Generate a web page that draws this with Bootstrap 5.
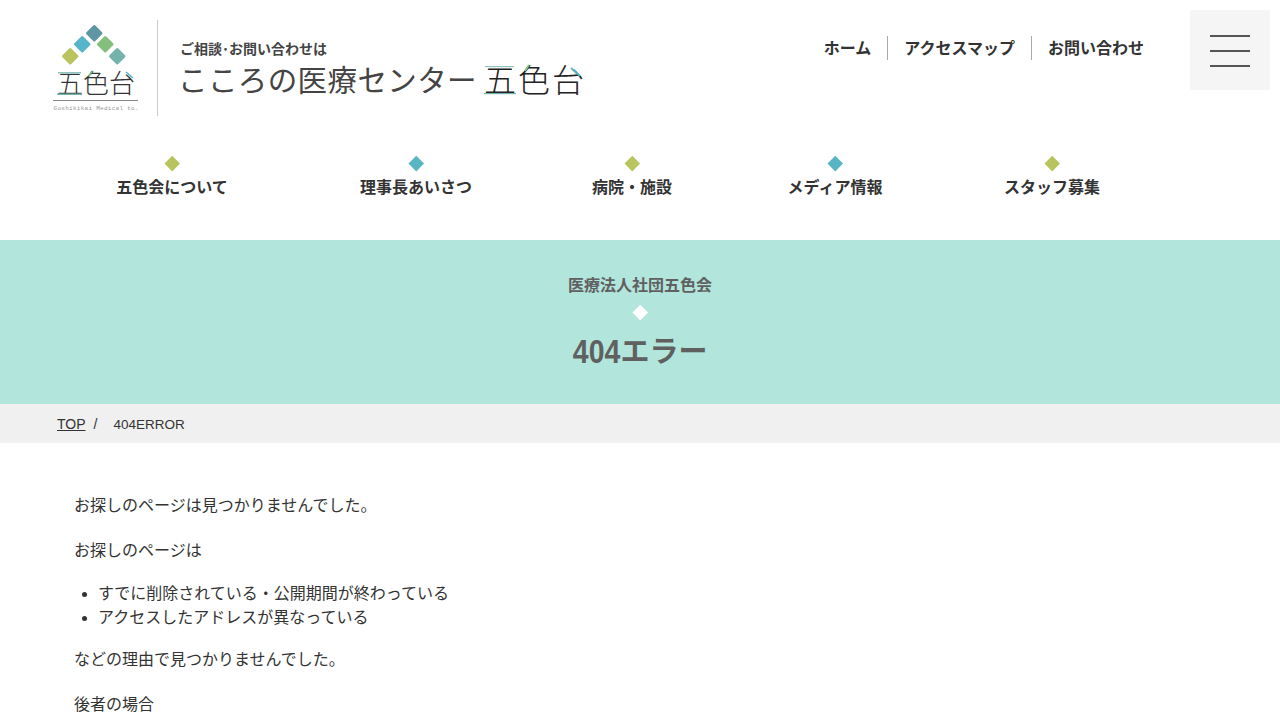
<!DOCTYPE html>
<html lang="ja">
<head>
    <meta charset="UTF-8">
    <meta name="viewport" content="width=device-width, initial-scale=1.0">
    <title>404エラー</title>
    <link href="https://cdn.jsdelivr.net/npm/bootstrap@5.3.0/dist/css/bootstrap.min.css" rel="stylesheet">
    <script src="https://cdn.jsdelivr.net/npm/bootstrap@5.3.0/dist/js/bootstrap.bundle.min.js"></script>
    <style>
        body { font-family: "Liberation Sans", "Noto Sans CJK JP", sans-serif; color: #333; height: 720px; overflow: hidden; }
        .site-head { height: 130px; padding: 10px 10px 0 50px; }
        .logo-box { margin-top: 10px; height: 96px; }
        .logo-mark { width: 90px; height: 96px; }
        .logo-rule { width: 1px; height: 96px; background: #ccc; margin: 0 22px 0 17px; }
        .logo-tag { font-size: 14px; font-weight: 700; line-height: 18px; margin-top: 20px; color: #444; }
        .logo-name { font-size: 29.5px; line-height: 40px; color: #444; margin-top: 1px; margin-left: -2px; white-space: nowrap; letter-spacing: .4px; }
        .logo-word { width: 112px; height: 44px; margin-left: 7px; overflow: visible; }
        .top-links { margin: 26px 30px 0 0; height: 24px; }
        .top-links a { font-size: 16px; font-weight: 700; color: #333; text-decoration: none; height: 24px; line-height: 26px; padding: 0 16px; border-left: 1px solid #aaa; }
        .top-links a:first-child { border-left: 0; margin-right: 0; }
        .menu-btn { width: 80px; height: 80px; background: #f5f5f5; border: 0; padding: 2px 0 0; gap: 13px; }
        .menu-btn span { width: 40px; height: 2px; background: #555; }
        .main-nav { display: grid; grid-template-columns: 244px 244px 188px 218px 216px; margin-left: 50px; height: 110px; padding-top: 25px; }
        .main-nav a { font-size: 16px; font-weight: 700; color: #333; text-decoration: none; text-align: center; line-height: 24px; }
        .dia { display: block; width: 10.5px; height: 10.5px; transform: rotate(45deg); margin: 0 auto; }
        .main-nav .dia { margin-top: 3px; margin-bottom: 7px; }
        .dia-green { background: #b9c45f; }
        .dia-blue { background: #57b5c4; }
        .dia-white { background: #fff; }
        .page-banner { height: 164px; background: #b2e5dc; color: #606060; text-align: center; padding-top: 33px; }
        .page-banner p { font-size: 16px; font-weight: 700; line-height: 26px; margin: 0 0 8px; }
        .page-banner h1 { font-size: 29px; font-weight: 700; line-height: 40px; margin: 14px 0 0; }
        .num-tall { display: inline-block; font-size: 33px; line-height: 40px; transform: scaleX(.86); margin: 0 -3.500px; vertical-align: top; }
        .crumbs { height: 39px; background: #f0f0f0; padding-left: 57px; font-size: 14px; line-height: 40px; color: #333; }
        .crumbs a { color: #333; }
        .crumbs .sep { margin: 0 16px 0 8px; }
        .crumbs .here { font-size: 13.500px; }
        .page-body { padding: 51px 74px 0; font-size: 16px; line-height: 24px; color: #333; }
        .page-body p { margin-bottom: 21px; }
        .page-body ul { padding-left: 24px; margin-top: -2px; margin-bottom: 18px; }
    </style>
</head>
<body>
<header class="site-head d-flex justify-content-between align-items-start">
    <div class="logo-box d-flex">
        <svg class="logo-mark" viewBox="0 0 90 96" aria-label="五色台">
            <rect x="38" y="7" width="12.500" height="12.500" rx="1.500" fill="#5f96a3" transform="rotate(45 44.250 13.250)"/>
            <rect x="26" y="18" width="12.500" height="12.500" rx="1.500" fill="#57b5c9" transform="rotate(45 32.250 24.250)"/>
            <rect x="49" y="18" width="12.500" height="12.500" rx="1.500" fill="#84bf7e" transform="rotate(45 55.250 24.250)"/>
            <rect x="14" y="30" width="12.500" height="12.500" rx="1.500" fill="#b9c45f" transform="rotate(45 20.250 36.250)"/>
            <rect x="61" y="30" width="12.500" height="12.500" rx="1.500" fill="#75b2ab" transform="rotate(45 67.250 36.250)"/>
            <text x="7 33 59" y="73" font-size="26" font-family="Noto Sans CJK JP" font-weight="300" fill="#333">五色台</text>
            <rect x="8" y="52" width="23" height="1.500" fill="#8fc4bd"/>
            <rect x="7" y="73.500" width="25" height="1.500" fill="#6fb5ad"/>
            <path d="M39 56l3-5" stroke="#84bf7e" stroke-width="1.500" fill="none"/>
            <path d="M76 52l7 6" stroke="#57b5c9" stroke-width="1.500" fill="none"/>
            <rect x="3" y="80" width="85" height="1" fill="#888"/>
            <text x="3.500" y="90" font-size="6" font-family="Liberation Mono" fill="#999" textLength="85">Goshikikai Medical to.</text>
        </svg>
        <div class="logo-rule"></div>
        <div>
            <div class="logo-tag">ご相談･お問い合わせは</div>
            <div class="logo-name d-flex align-items-center">こころの医療センター
                <svg class="logo-word" viewBox="0 0 112 44" aria-label="五色台">
                    <text x="0 34 68" y="33" font-size="32" font-family="Noto Sans CJK JP" font-weight="300" fill="#222">五色台</text>
                    <rect x="1" y="7" width="29" height="1.200" fill="#8fc4bd"/>
                    <rect x="0" y="34" width="32" height="1.200" fill="#6fb5ad"/>
                    <path d="M41 12l4-6" stroke="#84bf7e" stroke-width="1.800" fill="none"/>
                    <path d="M87 9l9 8" stroke="#57b5c9" stroke-width="1.800" fill="none"/>
                </svg>
            </div>
        </div>
    </div>
    <div class="d-flex align-items-start">
        <nav class="top-links d-flex">
            <a href="#">ホーム</a>
            <a href="#">アクセスマップ</a>
            <a href="#">お問い合わせ</a>
        </nav>
        <button class="menu-btn d-flex flex-column justify-content-center align-items-center" type="button" aria-label="menu">
            <span></span><span></span><span></span>
        </button>
    </div>
</header>

<nav class="main-nav">
    <a href="#"><i class="dia dia-green"></i>五色会について</a>
    <a href="#"><i class="dia dia-blue"></i>理事長あいさつ</a>
    <a href="#"><i class="dia dia-green"></i>病院・施設</a>
    <a href="#"><i class="dia dia-blue"></i>メディア情報</a>
    <a href="#"><i class="dia dia-green"></i>スタッフ募集</a>
</nav>

<section class="page-banner">
    <p>医療法人社団五色会</p>
    <i class="dia dia-white"></i>
    <h1><span class="num-tall">404</span>エラー</h1>
</section>

<div class="crumbs"><a href="#">TOP</a><span class="sep">/</span><span class="here">404ERROR</span></div>

<main class="page-body">
    <p>お探しのページは見つかりませんでした。</p>
    <p>お探しのページは</p>
    <ul>
        <li>すでに削除されている・公開期間が終わっている</li>
        <li>アクセスしたアドレスが異なっている</li>
    </ul>
    <p>などの理由で見つかりませんでした。</p>
    <p>後者の場合</p>
</main>
</body>
</html>
